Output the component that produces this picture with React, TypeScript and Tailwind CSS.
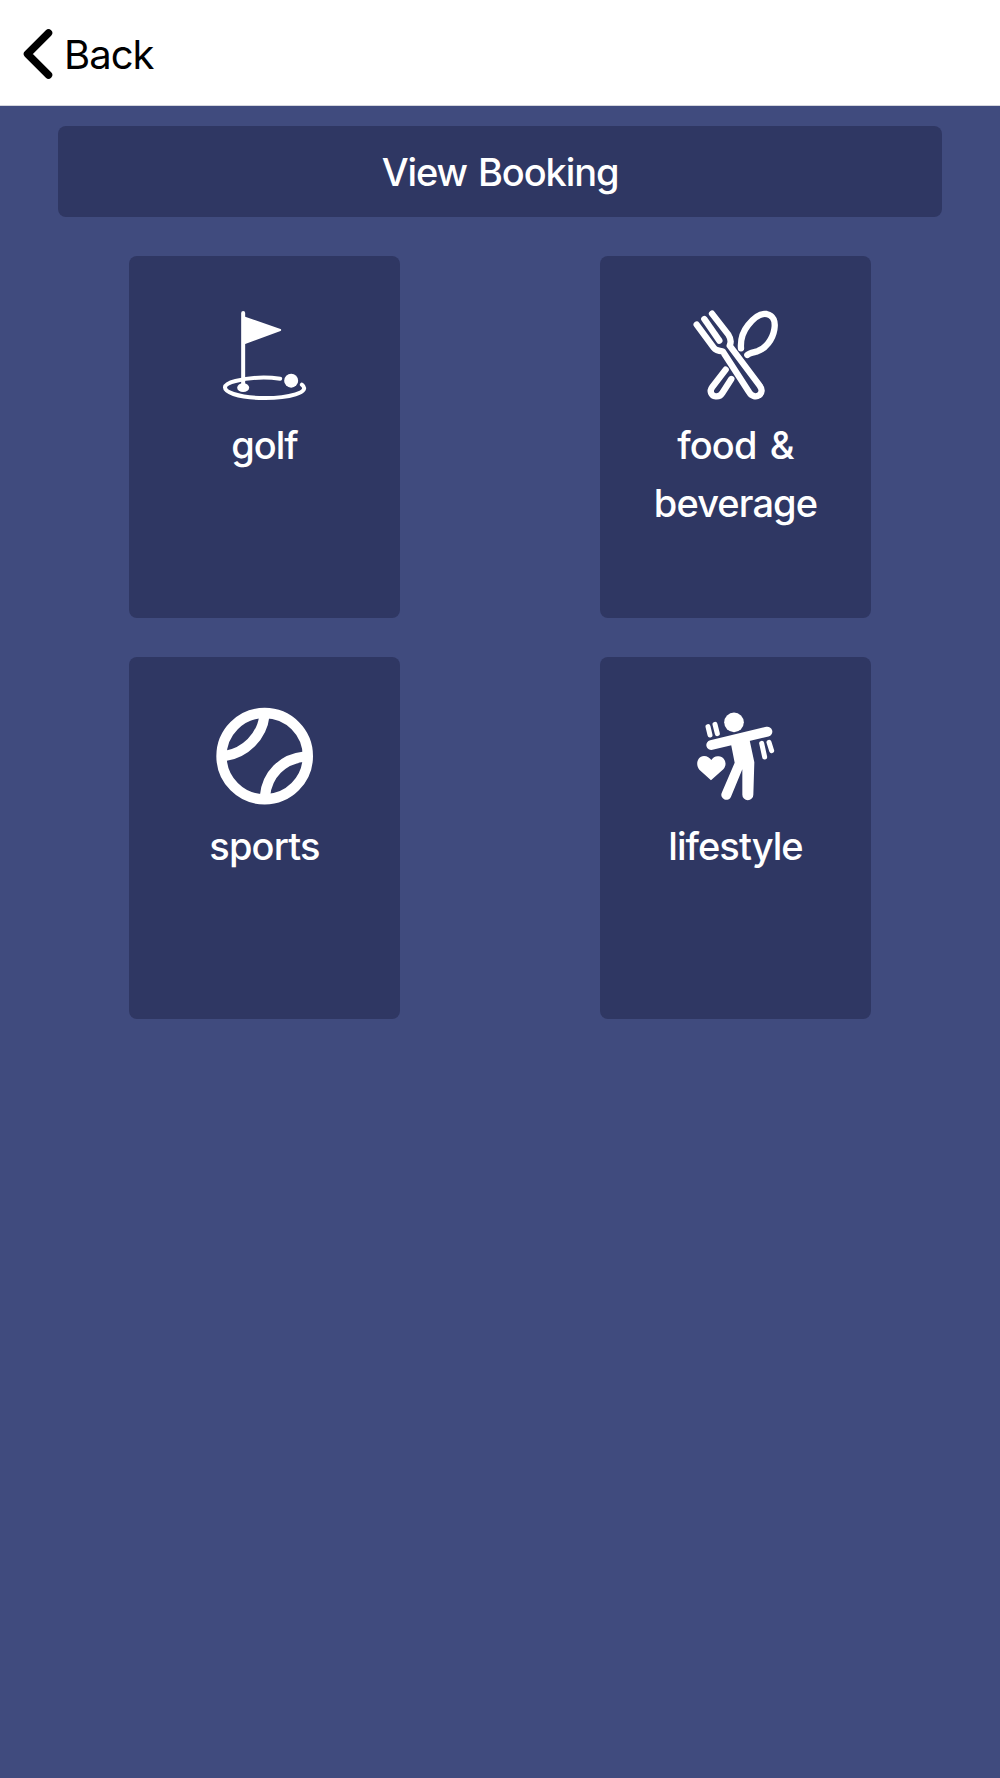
import type { ReactNode } from "react";

function Icon({ viewBox, children }: { viewBox: string; children: ReactNode }) {
  return (
    <svg
      className="h-[110px] w-[110px] shrink-0 text-white"
      viewBox={viewBox}
      fill="none"
      stroke="currentColor"
      strokeLinecap="round"
      strokeLinejoin="round"
      aria-hidden="true"
    >
      {children}
    </svg>
  );
}

function GolfIcon() {
  return (
    <Icon viewBox="-0.5 0 330 330">
      <path d="M99 39V258" strokeWidth="12" />
      <path d="M104 53L210 90L104 129Z" fill="currentColor" strokeWidth="6" />
      <path d="M210 236C165 230 112 234 76 243C35 253 35 270 70 282C120 298 207 298 256 283C283 275 288 264 275 254" strokeWidth="12" />
      <ellipse cx="99" cy="263" rx="18" ry="13" fill="currentColor" stroke="none" />
      <circle cx="243" cy="242" r="21" fill="currentColor" stroke="none" />
    </Icon>
  );
}

function FoodIcon() {
  return (
    <Icon viewBox="3 0 330 330">
      <g strokeWidth="19">
        <path d="M50 74L101 143C107 151 114 153 128 154L207 276C215 290 229 292 237 286C247 279 247 267 239 257L149 137C154 127 152 115 145 104L96 41" />
        <path d="M73 57L118 122" />
        <path d="M183 145C181 118 188 96 204 76C221 54 241 39 260 42C281 46 287 65 283 88C278 119 256 146 232 154C217 158 208 159 202 165" />
        <path d="M137 209L97 261C87 274 94 288 107 289C116 290 122 287 127 279L154 237" />
      </g>
    </Icon>
  );
}

function SportsIcon() {
  return (
    <Icon viewBox="15 3 330 330">
      <g strokeWidth="31" strokeLinecap="butt">
        <circle cx="179" cy="168.500" r="129.500" />
        <path d="M178 48C171 110 120 159 60 168" />
        <path d="M298 170C232 177 186 224 180 288" />
      </g>
    </Icon>
  );
}

function LifestyleIcon() {
  return (
    <Icon viewBox="-12 3 330 330">
      <circle cx="147" cy="67" r="29.500" fill="currentColor" stroke="none" />
      <path d="M79 135L247 95" strokeWidth="30" />
      <path d="M136 122L192 112L208 187L205 284A16 16 0 0 1 172 284V208L138 290A15 15 0 0 1 110 279L149 188Z" fill="currentColor" stroke="none" />
      <path d="M69 80L75 105M90 73L97 101" strokeWidth="15" />
      <path d="M230 130L239 171M252 127L260 152" strokeWidth="15" />
      <path d="M78 241L43 209C31 196 36 169 57 168C67 168 74 174 79 180C84 172 91 168 101 169C121 171 128 194 115 208Z" fill="currentColor" stroke="none" />
    </Icon>
  );
}

const services = [
  { name: "golf", lines: [{ text: "golf", spacing: "tracking-[-1px]" }], icon: <GolfIcon /> },
  {
    name: "food",
    lines: [
      { text: "food &", spacing: "tracking-[-0.9px] [word-spacing:4px]" },
      { text: "beverage", spacing: "tracking-[-0.9px]" },
    ],
    icon: <FoodIcon />,
  },
  { name: "sports", lines: [{ text: "sports", spacing: "tracking-[-0.8px]" }], icon: <SportsIcon /> },
  { name: "lifestyle", lines: [{ text: "lifestyle", spacing: "tracking-[-0.95px]" }], icon: <LifestyleIcon /> },
];

export default function App() {
  return (
    <div className="flex min-h-[1778px] w-full flex-col bg-[#404b7e] font-[Inter,sans-serif] text-white">
      <header className="flex h-[106px] shrink-0 items-center border-b border-[#d5d6de] bg-white pt-[3px] pl-[23px] text-black">
        <button className="flex items-center gap-[10px]">
          <svg className="h-[52px] w-[31px]" viewBox="0 0 31 52" fill="none" aria-hidden="true">
            <path d="M25.500 5L4.500 26L25.500 47" stroke="currentColor" strokeWidth="7.500" strokeLinecap="round" strokeLinejoin="round" />
          </svg>
          <span className="pt-px text-[40px] leading-[48px] tracking-[-1px]">Back</span>
        </button>
      </header>
      <main className="flex flex-col px-[58px] pt-5">
        <button className="h-[91px] rounded-lg bg-[#2f3763] text-[38px] leading-[58px] font-medium tracking-[-1.1px] [word-spacing:2px]">
          View Booking
        </button>
        <div className="mt-[39px] grid grid-cols-[270.5px_270.5px] justify-between gap-y-[39px] px-[71.25px]">
          {services.map((service) => (
            <button
              key={service.name}
              className="flex h-[362px] flex-col items-center rounded-lg bg-[#2f3763] pt-11"
            >
              {service.icon}
              <span className="mt-[6px] text-[38px] leading-[58px] font-medium">
                {service.lines.map((line) => (
                  <span key={line.text} className={`block ${line.spacing}`}>{line.text}</span>
                ))}
              </span>
            </button>
          ))}
        </div>
      </main>
    </div>
  );
}
